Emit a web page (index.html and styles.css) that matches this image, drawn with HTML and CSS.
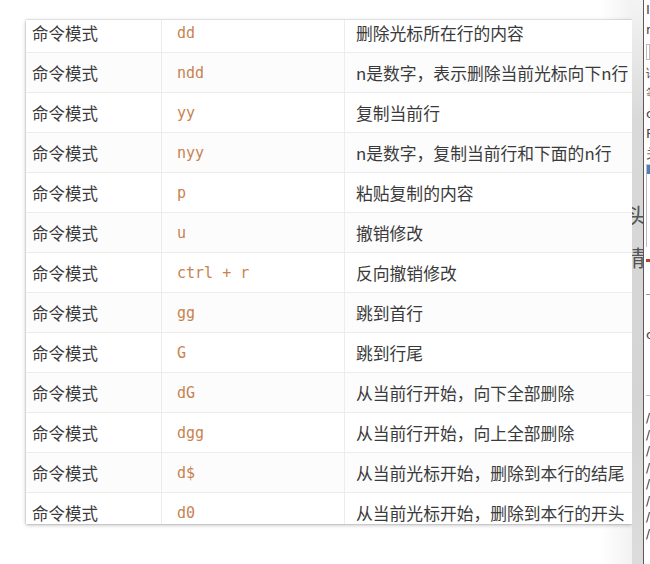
FILE: index.html
```html
<!DOCTYPE html>
<html lang="zh">
<head>
<meta charset="utf-8">
<link rel="stylesheet" href="styles.css">
</head>
<body>
<div class="page">
  <div class="main">
    <div class="popup">
      <div class="rows">
        <div class="row"><div class="c1">命令模式</div><div class="c2"><code>dd</code></div><div class="c3">删除光标所在行的内容</div></div>
        <div class="row"><div class="c1">命令模式</div><div class="c2"><code>ndd</code></div><div class="c3">n是数字，表示删除当前光标向下n行</div></div>
        <div class="row"><div class="c1">命令模式</div><div class="c2"><code>yy</code></div><div class="c3">复制当前行</div></div>
        <div class="row"><div class="c1">命令模式</div><div class="c2"><code>nyy</code></div><div class="c3">n是数字，复制当前行和下面的n行</div></div>
        <div class="row"><div class="c1">命令模式</div><div class="c2"><code>p</code></div><div class="c3">粘贴复制的内容</div></div>
        <div class="row"><div class="c1">命令模式</div><div class="c2"><code>u</code></div><div class="c3">撤销修改</div></div>
        <div class="row"><div class="c1">命令模式</div><div class="c2"><code>ctrl + r</code></div><div class="c3">反向撤销修改</div></div>
        <div class="row"><div class="c1">命令模式</div><div class="c2"><code>gg</code></div><div class="c3">跳到首行</div></div>
        <div class="row"><div class="c1">命令模式</div><div class="c2"><code>G</code></div><div class="c3">跳到行尾</div></div>
        <div class="row"><div class="c1">命令模式</div><div class="c2"><code>dG</code></div><div class="c3">从当前行开始，向下全部删除</div></div>
        <div class="row"><div class="c1">命令模式</div><div class="c2"><code>dgg</code></div><div class="c3">从当前行开始，向上全部删除</div></div>
        <div class="row"><div class="c1">命令模式</div><div class="c2"><code>d$</code></div><div class="c3">从当前光标开始，删除到本行的结尾</div></div>
        <div class="row"><div class="c1">命令模式</div><div class="c2"><code>d0</code></div><div class="c3">从当前光标开始，删除到本行的开头</div></div>
      </div>
    </div>
    <div class="strip">
      <div class="frag f1">头</div>
      <div class="frag f2">請</div>
    </div>
  </div>
  <div class="side">
    <div class="s-t t1">I</div>
    <div class="s-t t2">n</div>
    <div class="s-input"></div>
    <div class="s-t t3">语</div>
    <div class="s-t">等</div>
    <div class="s-t">c</div>
    <div class="s-t">P</div>
    <div class="s-t">关</div>
    <div class="s-box"><div class="s-blue"></div></div>
    <div class="s-mark"></div>
    <div class="s-line"></div>
    <div class="s-t t4">c</div>
    <div class="s-line2"></div>
    <div class="slashes">
      <span>/</span><span>/</span><span>/</span><span>/</span><span>/</span><span>/</span><span>/</span><span>/</span>
    </div>
  </div>
</div>
</body>
</html>
```

FILE: styles.css
```css
html, body {
  margin: 0;
  padding: 0;
  background: #ffffff;
}
body {
  font-family: "Noto Sans CJK SC", "Noto Sans", sans-serif;
  color: #333;
}
.page {
  display: flex;
  width: 650px;
  height: 564px;
  overflow: hidden;
}
.main {
  display: flex;
  width: 643px;
  flex: none;
  background: linear-gradient(to right, #ffffff 0, #ffffff 600px, #f2f2f2 632px);
}
.popup {
  margin: 20px 0 0 26px;
  width: 606px;
  height: 504px;
  overflow: hidden;
  background: #fff;
  box-shadow: 0 1px 4px rgba(0,0,0,0.28), 0 0 1px rgba(0,0,0,0.35);
  flex: none;
}
.rows {
  margin-top: -7px;
}
.row {
  display: flex;
  height: 40px;
  border-bottom: 1px solid #ececec;
  box-sizing: border-box;
  align-items: stretch;
}
.row:nth-child(even) {
  background: #fcfcfc;
}
.c1, .c2, .c3 {
  display: flex;
  align-items: center;
  box-sizing: border-box;
  white-space: nowrap;
  overflow: hidden;
}
.c1 {
  width: 136px;
  padding-left: 6px;
  border-right: 1px solid #ececec;
  font-size: 16.5px;
  color: #3a3a3a;
}
.c2 {
  width: 183px;
  padding-left: 15px;
  border-right: 1px solid #ececec;
}
.c3 {
  flex: 1;
  padding-left: 11px;
  font-size: 16.8px;
  color: #3a3a3a;
}
code {
  font-family: "DejaVu Sans Mono", "Liberation Mono", monospace;
  font-size: 15px;
  color: #c8824f;
  letter-spacing: 0;
}
.strip {
  width: 11px;
  flex: none;
  background: linear-gradient(to bottom, #f4f4f4 0, #d9d9d9 120px, #d4d4d4 400px, #dcdcdc 564px);
  overflow: hidden;
  position: relative;
}
.frag {
  font-size: 22px;
  color: #555;
  white-space: nowrap;
  margin-left: -6px;
  line-height: 1;
}
.f1 { margin-top: 203px; }
.f2 { margin-top: 20px; margin-left: -9px; }
.side {
  width: 7px;
  flex: none;
  border-left: 1px solid #5a5a5a;
  background: #fff;
  overflow: hidden;
  padding-left: 2px;
  box-sizing: border-box;
  font-family: "DejaVu Sans", sans-serif;
  color: #444;
}
.s-t {
  font-size: 13px;
  line-height: 20px;
  height: 20px;
  white-space: nowrap;
}
.t1 { margin-top: 0; }
.s-input {
  height: 14px;
  border: 1px solid #bbb;
  margin: 4px 0 4px 0;
}
.s-box {
  height: 82px;
  border-left: 1px solid #bbb;
  border-top: 1px solid #ccc;
  margin-top: 0;
}
.s-blue {
  height: 9px;
  background: #4a7fc0;
}
.s-mark {
  width: 4px;
  height: 3px;
  background: #b4442a;
  margin-top: 12px;
}
.s-line {
  height: 1px;
  background: #999;
  margin-top: 32px;
}
.t4 { margin-top: 30px; }
.s-line2 {
  height: 1px;
  background: #bbb;
  margin-top: 50px;
}
.slashes {
  display: flex;
  flex-direction: column;
  margin-top: 14px;
  font-size: 12px;
  line-height: 16.5px;
  color: #333;
}
```
